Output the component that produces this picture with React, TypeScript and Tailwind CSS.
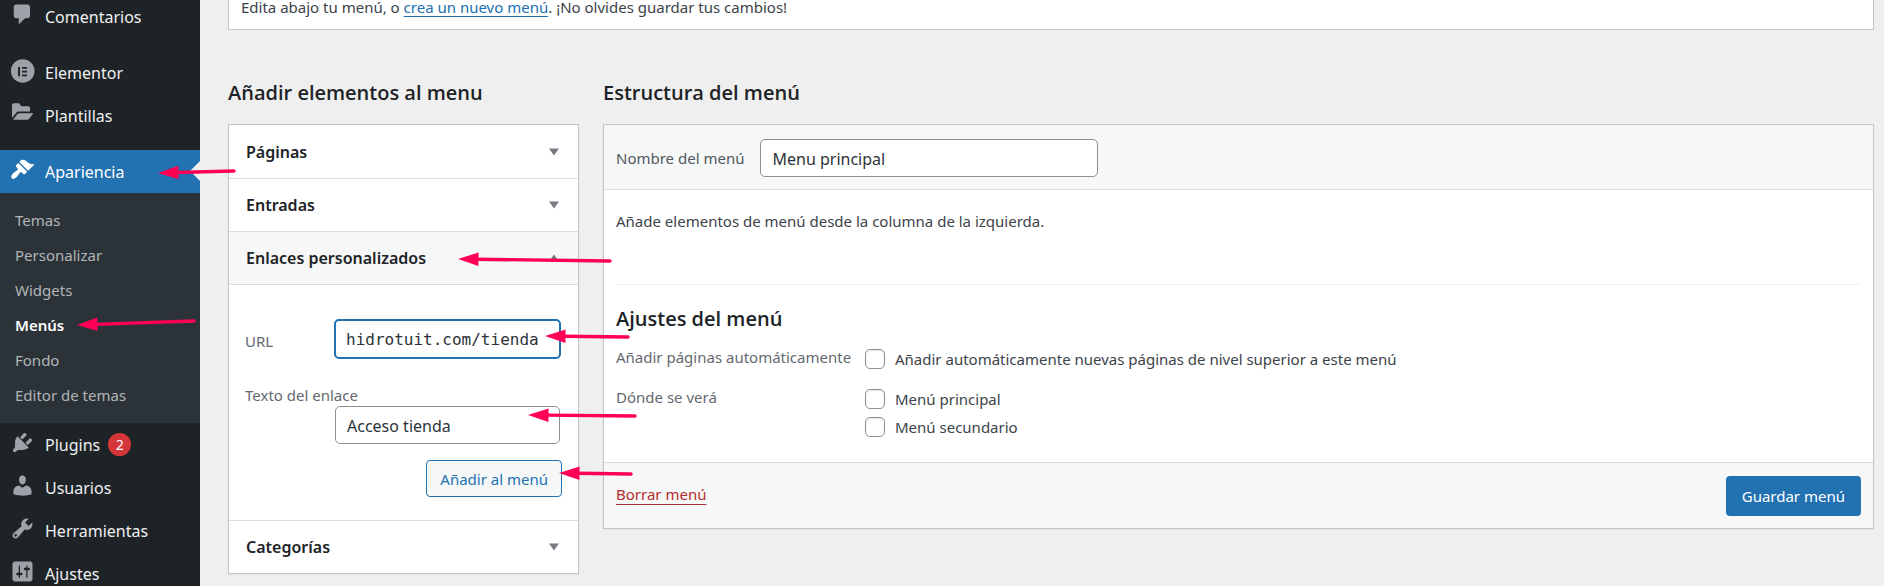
import type { ReactNode } from "react";

const iconPaths = {
  comments:
    "M5 2h9c1.1 0 2 .9 2 2v7c0 1.1-.9 2-2 2h-2l-5 5v-5H5c-1.1 0-2-.9-2-2V4c0-1.1.9-2 2-2z",
  appearance:
    "M14.48 11.06L7.41 3.99l1.5-1.5c.5-.56 2.3-.47 3.51.32 1.21.8 1.43 1.28 2.91 2.1 1.18.64 2.45 1.26 4.45.85zm-.71.71L6.7 4.7 4.93 6.47c-.39.39-.39 1.02 0 1.41l1.06 1.06c.39.39.39 1.03 0 1.42-.6.6-1.43 1.11-2.21 1.69-.35.26-.7.53-1.01.84C1.43 14.23.4 16.08 1.4 17.07c.99 1 2.84-.03 4.18-1.36.31-.31.58-.66.85-1.02.57-.78 1.08-1.61 1.69-2.21.39-.39 1.02-.39 1.41 0l1.06 1.06c.39.39 1.02.39 1.41 0z",
  plugins:
    "M13.11 4.36L9.87 7.6 8 5.73l3.24-3.24c.35-.34 1.05-.2 1.56.32.52.51.66 1.21.31 1.55zm-8 1.77l.91-1.12 9.01 9.01-1.19.84c-.71.71-2.63 1.16-3.82 1.16H6.14L4.9 17.26c-.59.59-1.54.59-2.12 0-.59-.58-.59-1.53 0-2.12l1.24-1.24v-3.88c0-1.13.4-3.19 1.09-3.89zm7.26 3.97l3.24-3.24c.34-.35 1.04-.21 1.55.31.52.51.66 1.21.31 1.55l-3.24 3.25z",
  users:
    "M10 9.25c-2.27 0-2.73-3.44-2.73-3.44C7 4.02 7.82 2 9.97 2c2.16 0 2.98 2.02 2.71 3.81 0 0-.41 3.44-2.68 3.44zm0 2.57L12.72 10c2.39 0 4.52 2.33 4.52 4.53v2.49s-3.65 1.13-7.24 1.13c-3.65 0-7.24-1.13-7.24-1.13v-2.49c0-2.25 1.94-4.48 4.47-4.48z",
  tools:
    "M16.68 9.77c-1.34 1.34-3.3 1.67-4.95.99l-5.41 6.52c-.99.99-2.59.99-3.58 0s-.99-2.59 0-3.57l6.52-5.42c-.68-1.65-.35-3.61.99-4.95 1.28-1.28 3.12-1.62 4.72-1.06l-2.89 2.89 2.82 2.82 2.86-2.87c.53 1.58.18 3.39-1.08 4.65zM3.81 16.21c.4.39 1.04.39 1.43 0 .4-.4.4-1.04 0-1.43-.39-.4-1.03-.4-1.43 0-.39.39-.39 1.03 0 1.43z",
  settings:
    "M18 16V4c0-1.1-.9-2-2-2H4c-1.1 0-2 .9-2 2v12c0 1.1.9 2 2 2h12c1.1 0 2-.9 2-2zM8 11h1c.55 0 1 .45 1 1s-.45 1-1 1H8v1.5c0 .28-.22.5-.5.5s-.5-.22-.5-.5V13H6c-.55 0-1-.45-1-1s.45-1 1-1h1V5.5c0-.28.22-.5.5-.5s.5.22.5.5V11zm5-2h-1c-.55 0-1-.45-1-1s.45-1 1-1h1V5.5c0-.28.22-.5.5-.5s.5.22.5.5V7h1c.55 0 1 .45 1 1s-.45 1-1 1h-1v5.5c0 .28-.22.5-.5.5s-.5-.22-.5-.5V9z",
};

function MenuIcon({ name }: { name: keyof typeof iconPaths }) {
  return (
    <svg viewBox="0 0 20 20" className="size-[25px]" fill="currentColor" aria-hidden="true">
      <path fillRule="evenodd" d={iconPaths[name]} />
    </svg>
  );
}

function ElementorIcon() {
  return (
    <svg viewBox="0 0 25 25" className="size-[25px]" aria-hidden="true">
      <circle cx="12.7" cy="13" r="11.8" fill="currentColor" />
      <path
        fill="#1d2327"
        d="M8 9h2v9.200H8zM12 9h5.100v1.800H12zM12 12.700h5.100v1.800H12zM12 16.400h5.100v1.800H12z"
      />
    </svg>
  );
}

function FolderIcon() {
  return (
    <svg viewBox="0 0 25 25" className="size-[25px]" fill="currentColor" aria-hidden="true">
      <path d="M2 4Q2 2.300 3.600 2.300H8.600Q9.800 2.300 10.300 3.700L10.900 5.300H18.300Q20 5.300 20 7V10.600H8.600Q7.400 10.600 6.500 11.600L2 17Z" />
      <path d="M9.600 12.200H23.400L19.400 17.600Q18.500 18.800 17.200 18.800H3L7.300 13.300Q8.200 12.200 9.600 12.200Z" />
    </svg>
  );
}

function NavItem({
  icon,
  label,
  active,
  badge,
}: {
  icon: ReactNode;
  label: string;
  active?: boolean;
  badge?: string;
}) {
  return (
    <a
      href="#"
      className={
        active
          ? "relative flex h-[43px] bg-[#2271b1] pl-[10px] text-white"
          : "flex h-[43px] pl-[10px] text-[#f0f0f1]"
      }
    >
      <span className={active ? "mt-[7px] w-[35px] text-white" : "mt-[7px] w-[35px] text-[#9ca2a7]"}>
        {icon}
      </span>
      <span className="flex items-center gap-2 text-[16px]">
        {label}
        {badge && (
          <span className="flex size-[23px] items-center justify-center rounded-full bg-[#d63638] text-sm text-white">
            {badge}
          </span>
        )}
      </span>
      {active && (
        <span className="absolute top-[11px] right-0 border-y-10 border-r-10 border-y-transparent border-r-[#efefef]" />
      )}
    </a>
  );
}

const submenu = ["Temas", "Personalizar", "Widgets", "Menús", "Fondo", "Editor de temas"];

function Sidebar() {
  return (
    <nav className="-mt-[5px] w-[200px] shrink-0 bg-[#1d2327]">
      <NavItem icon={<MenuIcon name="comments" />} label="Comentarios" />
      <div className="h-[13px]" />
      <NavItem icon={<ElementorIcon />} label="Elementor" />
      <NavItem icon={<FolderIcon />} label="Plantillas" />
      <div className="h-[13px]" />
      <NavItem icon={<MenuIcon name="appearance" />} label="Apariencia" active />
      <ul className="bg-[#2c3338] py-[10px]">
        {submenu.map((item) => (
          <li key={item}>
            <a
              href="#"
              className={
                item === "Menús"
                  ? "flex h-[35px] items-center pl-[15px] text-[15px] font-semibold text-white"
                  : "flex h-[35px] items-center pl-[15px] text-[15px] text-[#b1b5b9]"
              }
            >
              {item}
            </a>
          </li>
        ))}
      </ul>
      <NavItem icon={<MenuIcon name="plugins" />} label="Plugins" badge="2" />
      <NavItem icon={<MenuIcon name="users" />} label="Usuarios" />
      <NavItem icon={<MenuIcon name="tools" />} label="Herramientas" />
      <NavItem icon={<MenuIcon name="settings" />} label="Ajustes" />
    </nav>
  );
}

function SectionHeader({ label, open }: { label: string; open?: boolean }) {
  return (
    <h3>
      <button
        type="button"
        aria-expanded={!!open}
        className={
          open
            ? "flex h-[52px] w-full items-center justify-between bg-[#f6f7f7] pr-[19px] pl-[17px] text-[16px] font-semibold text-[#1d2327]"
            : "flex h-[52px] w-full items-center justify-between bg-white pr-[19px] pl-[17px] text-[16px] font-semibold text-[#1d2327]"
        }
      >
        {label}
        <svg viewBox="0 0 10 8" className="h-2 w-[10px]" fill="#787c82" aria-hidden="true">
          <path d={open ? "M0 7.500L5 0.500L10 7.500Z" : "M0 0.500H10L5 7.500Z"} />
        </svg>
      </button>
    </h3>
  );
}

function AddItems() {
  return (
    <section className="w-[351px] shrink-0">
      <h2 className="mb-[18px] font-['Open_Sans',sans-serif] text-[20px] leading-[26px] font-semibold text-[#1d2327]">
        Añadir elementos al menu
      </h2>
      <div className="divide-y divide-[#dcdcde] border border-[#c3c4c7] bg-white pt-px shadow-xs">
        <SectionHeader label="Páginas" />
        <SectionHeader label="Entradas" />
        <SectionHeader label="Enlaces personalizados" open />
        <form className="px-4 pt-[34px] pb-[23px]" onSubmit={(e) => e.preventDefault()}>
          <div className="flex items-center justify-between">
            <label htmlFor="url" className="pt-1 text-[15px] text-[#646970]">
              URL
            </label>
            <input
              id="url"
              type="text"
              defaultValue="hidrotuit.com/tienda"
              className="mr-px h-10 w-[227px] rounded-[5px] border-2 border-[#2271b1] bg-white px-[10px] font-['DejaVu_Sans_Mono',monospace] text-[16px] text-[#2c3338] outline-none"
            />
          </div>
          <div className="mt-[25px] flex flex-col">
            <label htmlFor="link-text" className="text-[15px] leading-[22px] text-[#646970]">
              Texto del enlace
            </label>
            <input
              id="link-text"
              type="text"
              defaultValue="Acceso tienda"
              className="mr-[2px] h-[38px] w-[225px] self-end rounded-[5px] border border-[#8c8f94] bg-white px-[11px] pt-[2px] text-[16px] text-[#2c3338] outline-none"
            />
          </div>
          <div className="mt-4 flex justify-end">
            <button
              type="submit"
              className="h-[37px] rounded-[4px] border border-[#2271b1] bg-[#f6f7f7] px-[13px] pt-[2px] text-[15px] text-[#2271b1]"
            >
              Añadir al menú
            </button>
          </div>
        </form>
        <SectionHeader label="Categorías" />
      </div>
    </section>
  );
}

function Check({ label }: { label: string }) {
  return (
    <label className="flex h-7 items-center gap-[10px]">
      <input
        type="checkbox"
        className="size-5 appearance-none rounded-[5px] border border-[#8c8f94] bg-white shadow-[inset_0_1px_2px_rgba(0,0,0,0.1)]"
      />
      {label}
    </label>
  );
}

function MenuStructure() {
  return (
    <section className="min-w-0 flex-1">
      <h2 className="mb-[18px] font-['Open_Sans',sans-serif] text-[20px] leading-[26px] font-semibold text-[#1d2327]">
        Estructura del menú
      </h2>
      <form
        className="border border-[#c3c4c7] bg-white text-[15px] text-[#3c434a] shadow-xs"
        onSubmit={(e) => e.preventDefault()}
      >
        <div className="flex h-[65px] items-center gap-4 border-b border-[#dcdcde] bg-[#f6f7f7] px-3 pt-px">
          <label htmlFor="menu-name" className="pt-[2px] text-[#50575e]">
            Nombre del menú
          </label>
          <input
            id="menu-name"
            type="text"
            defaultValue="Menu principal"
            className="h-[38px] w-[338px] rounded-[5px] border border-[#8c8f94] bg-white px-[11px] pt-[2px] text-[16px] text-[#2c3338] outline-none"
          />
        </div>
        <div className="px-3 pt-[19px] pb-[21px]">
          <p className="pb-[51px] leading-6">Añade elementos de menú desde la columna de la izquierda.</p>
          <div className="border-t border-[#f0f0f1] pt-[21px]">
            <h3 className="mb-[13px] font-['Open_Sans',sans-serif] text-[20px] leading-[26px] font-semibold text-[#1d2327]">
              Ajustes del menú
            </h3>
            <fieldset className="mb-3 grid grid-cols-[249px_1fr]">
              <legend className="contents text-[#646970]">
                <span className="leading-6">Añadir páginas automáticamente</span>
              </legend>
              <Check label="Añadir automáticamente nuevas páginas de nivel superior a este menú" />
            </fieldset>
            <fieldset className="grid grid-cols-[249px_1fr]">
              <legend className="contents text-[#646970]">
                <span className="leading-6">Dónde se verá</span>
              </legend>
              <div>
                <Check label="Menú principal" />
                <Check label="Menú secundario" />
              </div>
            </fieldset>
          </div>
        </div>
        <div className="flex h-[66px] items-center justify-between border-t border-[#dcdcde] bg-[#f6f7f7] px-3">
          <a href="#" className="pb-1 leading-5 text-[#b32d2e] underline underline-offset-4">
            Borrar menú
          </a>
          <button type="submit" className="h-10 rounded-[4px] bg-[#2271b1] px-4 pt-[2px] text-white">
            Guardar menú
          </button>
        </div>
      </form>
    </section>
  );
}

const arrows = [
  { tip: [158, 173], tail: [234, 171] },
  { tip: [77, 325], tail: [194, 321] },
  { tip: [458, 259], tail: [610, 261] },
  { tip: [545, 336], tail: [628, 337] },
  { tip: [528, 415], tail: [635, 416] },
  { tip: [559, 473], tail: [631, 474] },
];

function Annotations() {
  return (
    <svg className="pointer-events-none absolute top-0 left-0 h-[586px] w-[700px]" viewBox="0 0 700 586" aria-hidden="true">
      {arrows.map(({ tip, tail }) => {
        const angle = (Math.atan2(tail[1] - tip[1], tail[0] - tip[0]) * 180) / Math.PI;
        const length = Math.hypot(tail[0] - tip[0], tail[1] - tip[1]);
        return (
          <g key={tip[1]} transform={`translate(${tip[0]} ${tip[1]}) rotate(${angle})`}>
            <line x1="18" y1="0" x2={length} y2="0" stroke="#ff0055" strokeWidth="3.4" strokeLinecap="round" />
            <path d="M0 0L20.500 -6.800V6.800Z" fill="#ff0055" />
          </g>
        );
      })}
    </svg>
  );
}

export default function App() {
  return (
    <div className="relative flex h-screen overflow-hidden bg-[#efefef] font-['Noto_Sans',sans-serif]">
      <Sidebar />
      <main className="min-w-0 flex-1 pr-[10px] pl-7">
        <p className="h-[30px] border border-t-0 border-[#c3c4c7] bg-white px-3 text-[15px] leading-[14px] text-[#3c434a]">
          Edita abajo tu menú, o{" "}
          <a href="#" className="text-[#2271b1] underline underline-offset-3">
            crea un nuevo menú
          </a>
          . ¡No olvides guardar tus cambios!
        </p>
        <div className="mt-[50px] flex gap-6">
          <AddItems />
          <MenuStructure />
        </div>
      </main>
      <Annotations />
    </div>
  );
}
